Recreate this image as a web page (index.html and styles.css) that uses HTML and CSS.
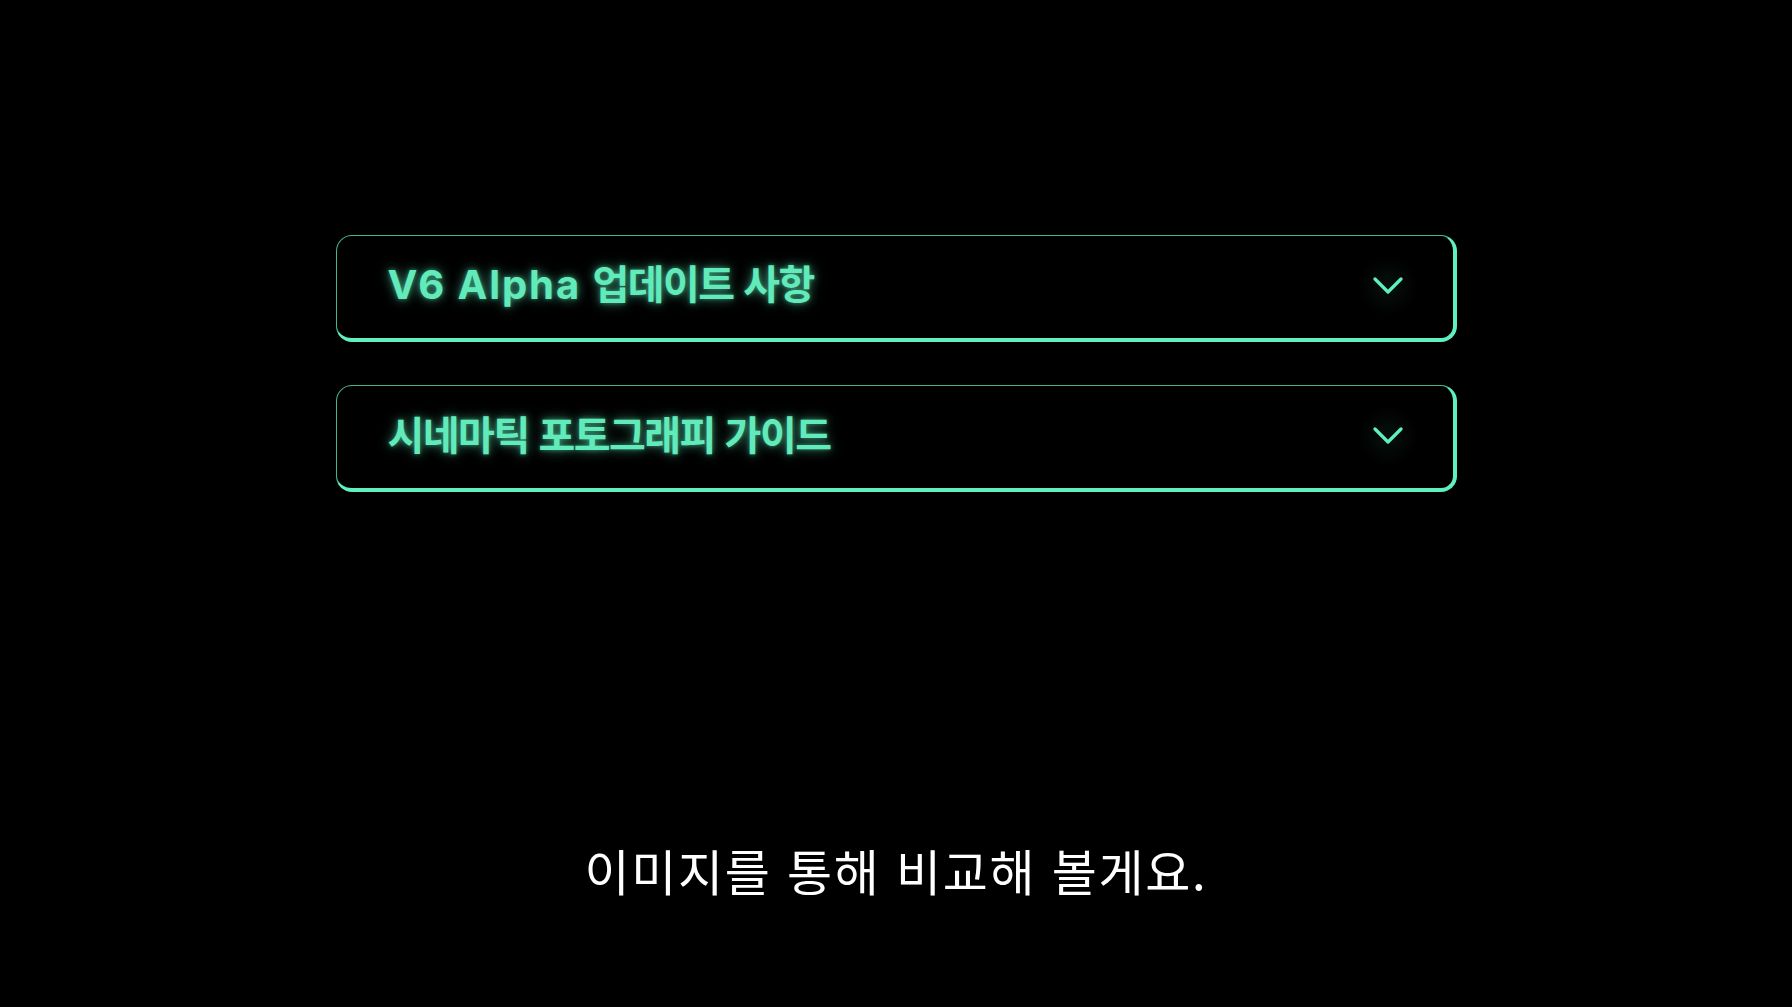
FILE: index.html
```html
<!DOCTYPE html>
<html lang="ko">
<head>
<meta charset="utf-8">
<link rel="stylesheet" href="styles.css">
</head>
<body>
<main class="page">
  <section class="list">
    <div class="item">
      <span class="title"><span class="latin">V6 Alpha </span>업데이트 사항</span>
      <span class="chev"><svg viewBox="0 0 30 18" width="30" height="18"><path d="M2 2 L15 15 L28 2" fill="none" stroke="#5ef0bf" stroke-width="3.2" stroke-linecap="round" stroke-linejoin="round"/></svg></span>
    </div>
    <div class="item">
      <span class="title">시네마틱 포토그래피 가이드</span>
      <span class="chev"><svg viewBox="0 0 30 18" width="30" height="18"><path d="M2 2 L15 15 L28 2" fill="none" stroke="#5ef0bf" stroke-width="3.2" stroke-linecap="round" stroke-linejoin="round"/></svg></span>
    </div>
  </section>
  <p class="subtitle">이미지를 통해 비교해 볼게요.</p>
</main>
</body>
</html>
```

FILE: styles.css
```css
html, body {
  margin: 0;
  padding: 0;
  background: #000;
  height: 100%;
}
.page {
  width: 1121px;
  margin: 0 auto;
  padding-top: 235px;
  display: flex;
  flex-direction: column;
}
.list {
  display: flex;
  flex-direction: column;
  gap: 43px;
}
.item {
  box-sizing: border-box;
  height: 107px;
  border-style: solid;
  border-color: rgba(94, 240, 191, 0.75) #5ef0bf #5ef0bf rgba(94, 240, 191, 0.75);
  border-width: 1.5px 4px 4px 1.5px;
  border-radius: 16px;
  display: flex;
  align-items: center;
  justify-content: space-between;
  padding: 0 47px 2px 51px;
}
.title {
  font-family: "Noto Sans CJK KR", sans-serif;
  font-weight: 700;
  font-size: 40px;
  line-height: 1;
  letter-spacing: -1.5px;
  color: #62ebba;
  text-shadow: 0 0 12px rgba(94, 240, 191, 0.6), 0 0 4px rgba(94, 240, 191, 0.45);
  margin-top: -6px;
}
.latin {
  font-family: Inter, "Noto Sans", sans-serif;
  font-weight: 700;
  letter-spacing: 1.9px;
}
.chev {
  display: flex;
  width: 60px;
  height: 60px;
  align-items: center;
  justify-content: center;
  margin-right: -12px;
  border-radius: 50%;
  background: radial-gradient(circle, rgba(94, 240, 191, 0.07) 0%, rgba(94, 240, 191, 0) 70%);
}
.subtitle {
  margin: 348px 0 0;
  text-align: center;
  font-family: "Noto Sans CJK KR", "Noto Sans", sans-serif;
  font-weight: 400;
  font-size: 49px;
  line-height: 60px;
  letter-spacing: 1.7px;
  color: #fff;
}
```
